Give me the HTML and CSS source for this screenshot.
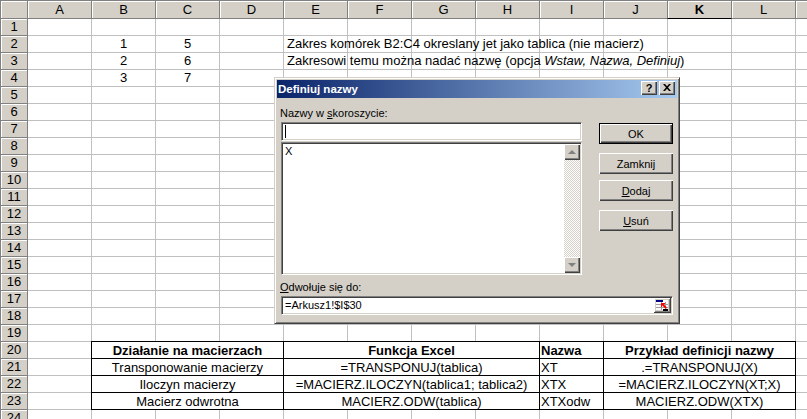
FILE: index.html
```html
<!DOCTYPE html>
<html lang="pl">
<head>
<meta charset="utf-8">
<title>Definiuj nazwy</title>
<link rel="stylesheet" href="styles.css">
</head>
<body>
<div class="sheet">
  <div class="row hdr">
    <div class="corner"></div>
    <div class="ch">A</div><div class="ch">B</div><div class="ch">C</div><div class="ch">D</div>
    <div class="ch">E</div><div class="ch">F</div><div class="ch">G</div><div class="ch">H</div>
    <div class="ch">I</div><div class="ch">J</div><div class="ch act">K</div><div class="ch">L</div><div class="ch"></div>
  </div>
  <div class="row"><div class="rh">1</div></div>
  <div class="row"><div class="rh">2</div><div class="c"></div><div class="c">1</div><div class="c">5</div><div class="c"></div><div class="t">Zakres komórek B2:C4 okreslany jet jako tablica (nie macierz)</div></div>
  <div class="row"><div class="rh">3</div><div class="c"></div><div class="c">2</div><div class="c">6</div><div class="c"></div><div class="t">Zakresowi temu można nadać nazwę (opcja <i>Wstaw, Nazwa, Definiuj</i>)</div></div>
  <div class="row"><div class="rh">4</div><div class="c"></div><div class="c">3</div><div class="c">7</div></div>
  <div class="row"><div class="rh">5</div></div>
  <div class="row"><div class="rh">6</div></div>
  <div class="row"><div class="rh">7</div></div>
  <div class="row"><div class="rh">8</div></div>
  <div class="row"><div class="rh">9</div></div>
  <div class="row"><div class="rh">10</div></div>
  <div class="row"><div class="rh">11</div></div>
  <div class="row"><div class="rh">12</div></div>
  <div class="row"><div class="rh">13</div></div>
  <div class="row"><div class="rh">14</div></div>
  <div class="row"><div class="rh">15</div></div>
  <div class="row"><div class="rh">16</div></div>
  <div class="row"><div class="rh">17</div></div>
  <div class="row"><div class="rh">18</div></div>
  <div class="row"><div class="rh">19</div></div>
  <div class="row"><div class="rh">20</div><div class="sp"></div>
    <div class="tc w1 b">Działanie na macierzach</div><div class="tc w2 b">Funkcja Excel</div><div class="tc w3 b">Nazwa</div><div class="tc w4 b">Przykład definicji nazwy</div></div>
  <div class="row"><div class="rh">21</div><div class="sp"></div>
    <div class="tc w1">Transponowanie macierzy</div><div class="tc w2">=TRANSPONUJ(tablica)</div><div class="tc w3">XT</div><div class="tc w4">.=TRANSPONUJ(X)</div></div>
  <div class="row"><div class="rh">22</div><div class="sp"></div>
    <div class="tc w1">Iloczyn macierzy</div><div class="tc w2">=MACIERZ.ILOCZYN(tablica1; tablica2)</div><div class="tc w3">XTX</div><div class="tc w4">=MACIERZ.ILOCZYN(XT;X)</div></div>
  <div class="row"><div class="rh">23</div><div class="sp"></div>
    <div class="tc w1">Macierz odwrotna</div><div class="tc w2">MACIERZ.ODW(tablica)</div><div class="tc w3">XTXodw</div><div class="tc w4">MACIERZ.ODW(XTX)</div></div>
  <div class="row"><div class="rh">24</div></div>
</div>

<div class="dlg">
  <div class="title">
    <span class="tt">Definiuj nazwy</span>
    <span class="tb">?</span>
    <span class="tb"><svg width="8" height="7" viewBox="0 0 8 7"><path d="M0 0h2l2 2.2L6 0h2L5 3.5 8 7H6L4 4.8 2 7H0l3-3.5z" fill="#000"/></svg></span>
  </div>
  <div class="dbody">
    <div class="top">
      <div class="lcol">
        <div class="lbl">Nazwy w <u>s</u>koroszycie:</div>
        <div class="fld name"><span class="caret"></span></div>
        <div class="fld list">
          <div class="items">X</div>
          <div class="sb">
            <div class="sbtn"><span class="arr up"></span></div>
            <div class="track"></div>
            <div class="sbtn"><span class="arr down"></span></div>
          </div>
        </div>
      </div>
      <div class="rcol">
        <div class="btn def">OK</div>
        <div class="btn b2">Zamknij</div>
        <div class="btn b3"><u>D</u>odaj</div>
        <div class="btn b4"><u>U</u>suń</div>
      </div>
    </div>
    <div class="lbl lbl2"><u>O</u>dwołuje się do:</div>
    <div class="fld ref">
      <span class="rtext">=Arkusz1!$I$30</span>
      <span class="rbtn"><svg width="17" height="15" viewBox="0 0 17 15">
        <rect x="0" y="0" width="17" height="15" fill="#d4d0c8"/>
        <path d="M0 0h16v1H1v13H0z" fill="#fff"/>
        <path d="M16 0h1v15H0v-1h16z" fill="#404040"/>
        <path d="M15 1h1v13H1v-1h14z" fill="#808080"/>
        <rect x="2" y="2" width="12" height="10" fill="#fff"/>
        <rect x="2" y="2" width="7" height="2" fill="#000080"/>
        <path d="M2 6h12v1H2zM2 9h12v1H2z" fill="#a0a0a0"/>
        <path d="M7 4h1v8H7zM11 4h1v8h-1z" fill="#a0a0a0"/>
        <path d="M7 5h4v1H9.5l3 3v1.5h-1.2L8 7.3V9H7z" fill="#ff0000"/>
        <rect x="9" y="11" width="5" height="2" fill="#000"/>
      </svg></span>
    </div>
  </div>
</div>
</body>
</html>
```

FILE: styles.css
```css
html, body {
  margin: 0;
  padding: 0;
}
body {
  width: 807px;
  height: 419px;
  overflow: hidden;
  background: #fff;
  font-family: "Liberation Sans", Arial, sans-serif;
  font-size: 13px;
  color: #000;
  position: relative;
}
.sheet {
  width: 807px;
  overflow: hidden;
}
.row {
  display: flex;
  height: 17px;
  line-height: 16px;
  white-space: nowrap;
  background:
    linear-gradient(#c0c0c0, #c0c0c0) 0 100% / 100% 1px no-repeat,
    linear-gradient(to right, transparent 63px, #c0c0c0 63px) 28px 0 / 64px 100% repeat-x;
}
.row.hdr {
  height: 19px;
  line-height: 17px;
  background: #d4d0c8;
}
.corner, .ch, .rh {
  flex: none;
  box-sizing: border-box;
  background: #d4d0c8;
  border-right: 1px solid #808080;
  border-bottom: 1px solid #808080;
  box-shadow: inset 1px 1px #fff;
  text-align: center;
}
.corner {
  width: 28px;
  height: 19px;
  border-top: 1px solid #808080;
  border-left: 1px solid #808080;
}
.ch {
  width: 64px;
  height: 19px;
  border-top: 1px solid #808080;
}
.ch.act {
  font-weight: bold;
  border-bottom-color: #000;
  border-left: 1px solid #808080;
  margin-left: -1px;
  width: 65px;
}
.rh {
  width: 28px;
  height: 17px;
  border-left: 1px solid #808080;
}
.c {
  flex: none;
  width: 64px;
  box-sizing: border-box;
  padding-right: 1px;
  text-align: center;
}
.t {
  flex: none;
  padding-left: 3px;
}
.sp {
  flex: none;
  width: 63px;
}
.tc {
  flex: none;
  box-sizing: border-box;
  height: 18px;
  margin-top: -1px;
  border: 1px solid #000;
  background: #fff;
  text-align: center;
  line-height: 17px;
  overflow: hidden;
}
.tc + .tc {
  margin-left: -1px;
}
.tc.b {
  font-weight: bold;
}
.w1 { width: 193px; }
.w2 { width: 257px; }
.w3 { width: 65px; text-align: left; padding-left: 1px; }
.w4 { width: 193px; }

/* dialog */
.dlg {
  position: absolute;
  left: 274px;
  top: 77px;
  width: 406px;
  height: 247px;
  box-sizing: border-box;
  background: #d4d0c8;
  border: 1px solid;
  border-color: #d4d0c8 #404040 #404040 #d4d0c8;
  box-shadow: inset 1px 1px #fff, inset -1px -1px #808080;
  padding: 2px;
  font-family: "Liberation Sans", Tahoma, sans-serif;
  font-size: 11px;
}
.title {
  height: 18px;
  display: flex;
  align-items: flex-start;
  padding: 0 2px 0 1px;
  background: linear-gradient(to right, #0a246a, #a6caf0);
}
.tt {
  flex: 1;
  color: #fff;
  font-weight: bold;
  font-size: 11.5px;
  line-height: 14px;
  padding-top: 2px;
}
.tb {
  width: 16px;
  height: 14px;
  margin-top: 1px;
  margin-left: 2px;
  box-sizing: border-box;
  background: #d4d0c8;
  box-shadow: inset 1px 1px #fff, inset -1px -1px #404040, inset -2px -2px #808080;
  display: flex;
  align-items: center;
  justify-content: center;
  font-weight: bold;
  font-size: 11px;
  line-height: 14px;
  padding-bottom: 1px;
}
.dbody {
  padding: 8px 4px 0 4px;
}
.top {
  display: flex;
}
.lcol {
  width: 301px;
}
.lbl {
  height: 14px;
  line-height: 14px;
  margin-left: -1px;
  margin-bottom: 2px;
}
.lbl2 {
  margin-top: 5px;
}
.fld {
  box-sizing: border-box;
  height: 19px;
  background: #fff;
  border: 1px solid;
  border-color: #808080 #fff #fff #808080;
  box-shadow: inset 1px 1px #404040, inset -1px -1px #d4d0c8;
}
.name {
  padding: 2px 0 0 3px;
}
.caret {
  display: block;
  width: 1px;
  height: 13px;
  background: #000;
}
.list {
  margin-top: 1px;
  height: 133px;
  display: flex;
  padding: 1px;
}
.items {
  flex: 1;
  padding: 0 2px;
  line-height: 14px;
}
.sb {
  width: 16px;
  display: flex;
  flex-direction: column;
}
.sbtn {
  height: 16px;
  flex: none;
  box-sizing: border-box;
  background: #d4d0c8;
  box-shadow: inset 1px 1px #fff, inset -1px -1px #404040, inset -2px -2px #808080;
  display: flex;
  align-items: center;
  justify-content: center;
}
.arr {
  width: 0;
  height: 0;
  border-left: 4px solid transparent;
  border-right: 4px solid transparent;
}
.arr.up {
  border-bottom: 4px solid #808080;
}
.arr.down {
  border-top: 4px solid #808080;
}
.track {
  flex: 1;
  background: repeating-conic-gradient(#fff 0 25%, #d4d0c8 0 50%) 0 0 / 2px 2px;
}
.rcol {
  margin-left: 17px;
  padding-top: 17px;
  display: flex;
  flex-direction: column;
}
.btn {
  width: 74px;
  height: 21px;
  box-sizing: border-box;
  background: #d4d0c8;
  box-shadow: inset 1px 1px #fff, inset -1px -1px #404040, inset -2px -2px #808080;
  display: flex;
  align-items: center;
  justify-content: center;
  line-height: 14px;
}
.btn.def {
  border: 1px solid #000;
}
.b2 { margin-top: 9px; }
.b3 { margin-top: 6px; }
.b4 { margin-top: 9px; }
.ref {
  display: flex;
  align-items: stretch;
  padding: 1px;
  line-height: 15px;
}
.rtext {
  flex: 1;
  padding-left: 2px;
}
.rbtn {
  display: block;
  width: 17px;
  height: 15px;
}
.rbtn svg {
  display: block;
}
```
